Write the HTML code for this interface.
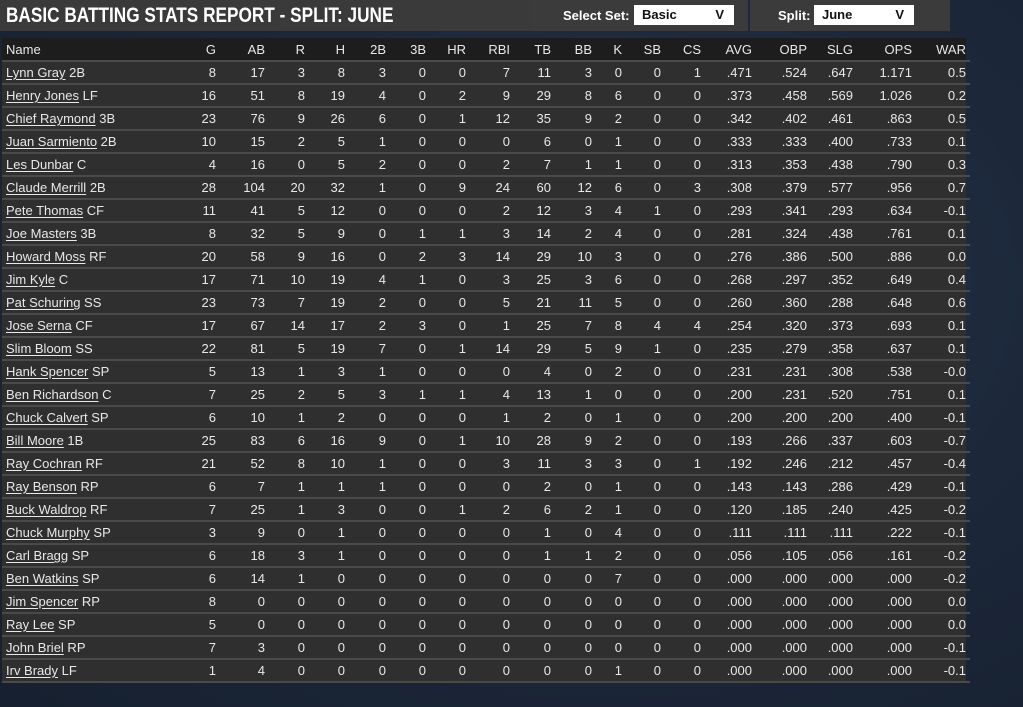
<!DOCTYPE html>
<html><head><meta charset="utf-8"><style>
body{margin:0;width:1023px;height:707px;overflow:hidden;background:radial-gradient(ellipse at 60% 40%,#243247 0%,#1b2638 60%,#16202f 100%);font-family:"Liberation Sans",sans-serif;color:#e8e8e8;position:relative}
.title{position:absolute;left:0;top:0;width:530px;height:31px;background:#3a3a3a}
.title span{position:absolute;left:6px;top:4px;font-size:21px;font-weight:bold;color:#fff;transform:scaleX(.82);transform-origin:left;white-space:nowrap}
.sel{position:absolute;top:0;height:31px;background:#3b3b3b;font-size:13px;font-weight:bold;color:#fff}
.box{position:absolute;top:5px;height:20px;background:#fff;color:#111;font-size:13px;font-weight:bold;line-height:20px;padding-left:8px;box-sizing:border-box}
.box i{position:absolute;right:10px;top:0;font-style:normal}
table{position:absolute;left:2px;top:38px;width:968px;border-collapse:collapse;font-size:13px;table-layout:fixed}
td{height:21px;padding:0;text-align:right;border-bottom:2px solid #4a4a4a;white-space:nowrap;overflow:visible}
tr{background:#2f2f2f}
tr.h{background:#1d1d1d}
tr.h td{height:22px;border-bottom:2px solid #4a4a4a}
td:first-child{text-align:left;text-indent:4px}
td:last-child{position:relative;left:-4px}
u{text-decoration:underline;text-underline-offset:2px}
</style></head><body>
<div class="title"><span>BASIC BATTING STATS REPORT - SPLIT: JUNE</span></div>
<div class="sel" style="left:530px;width:218px"><span style="position:absolute;left:33px;top:8px">Select Set:</span><div class="box" style="left:104px;width:100px">Basic<i>V</i></div></div>
<div class="sel" style="left:750px;width:200px"><span style="position:absolute;left:28px;top:8px">Split:</span><div class="box" style="left:64px;width:100px">June<i>V</i></div></div>
<table>
<colgroup><col style="width:174px"><col style="width:40px"><col style="width:49px"><col style="width:40px"><col style="width:40px"><col style="width:41px"><col style="width:40px"><col style="width:40px"><col style="width:44px"><col style="width:41px"><col style="width:41px"><col style="width:30px"><col style="width:39px"><col style="width:40px"><col style="width:51px"><col style="width:55px"><col style="width:46px"><col style="width:59px"><col style="width:58px"></colgroup>
<tr class="h"><td>Name</td><td>G</td><td>AB</td><td>R</td><td>H</td><td>2B</td><td>3B</td><td>HR</td><td>RBI</td><td>TB</td><td>BB</td><td>K</td><td>SB</td><td>CS</td><td>AVG</td><td>OBP</td><td>SLG</td><td>OPS</td><td>WAR</td></tr>
<tr><td><u>Lynn Gray</u> 2B</td><td>8</td><td>17</td><td>3</td><td>8</td><td>3</td><td>0</td><td>0</td><td>7</td><td>11</td><td>3</td><td>0</td><td>0</td><td>1</td><td>.471</td><td>.524</td><td>.647</td><td>1.171</td><td>0.5</td></tr>
<tr><td><u>Henry Jones</u> LF</td><td>16</td><td>51</td><td>8</td><td>19</td><td>4</td><td>0</td><td>2</td><td>9</td><td>29</td><td>8</td><td>6</td><td>0</td><td>0</td><td>.373</td><td>.458</td><td>.569</td><td>1.026</td><td>0.2</td></tr>
<tr><td><u>Chief Raymond</u> 3B</td><td>23</td><td>76</td><td>9</td><td>26</td><td>6</td><td>0</td><td>1</td><td>12</td><td>35</td><td>9</td><td>2</td><td>0</td><td>0</td><td>.342</td><td>.402</td><td>.461</td><td>.863</td><td>0.5</td></tr>
<tr><td><u>Juan Sarmiento</u> 2B</td><td>10</td><td>15</td><td>2</td><td>5</td><td>1</td><td>0</td><td>0</td><td>0</td><td>6</td><td>0</td><td>1</td><td>0</td><td>0</td><td>.333</td><td>.333</td><td>.400</td><td>.733</td><td>0.1</td></tr>
<tr><td><u>Les Dunbar</u> C</td><td>4</td><td>16</td><td>0</td><td>5</td><td>2</td><td>0</td><td>0</td><td>2</td><td>7</td><td>1</td><td>1</td><td>0</td><td>0</td><td>.313</td><td>.353</td><td>.438</td><td>.790</td><td>0.3</td></tr>
<tr><td><u>Claude Merrill</u> 2B</td><td>28</td><td>104</td><td>20</td><td>32</td><td>1</td><td>0</td><td>9</td><td>24</td><td>60</td><td>12</td><td>6</td><td>0</td><td>3</td><td>.308</td><td>.379</td><td>.577</td><td>.956</td><td>0.7</td></tr>
<tr><td><u>Pete Thomas</u> CF</td><td>11</td><td>41</td><td>5</td><td>12</td><td>0</td><td>0</td><td>0</td><td>2</td><td>12</td><td>3</td><td>4</td><td>1</td><td>0</td><td>.293</td><td>.341</td><td>.293</td><td>.634</td><td>-0.1</td></tr>
<tr><td><u>Joe Masters</u> 3B</td><td>8</td><td>32</td><td>5</td><td>9</td><td>0</td><td>1</td><td>1</td><td>3</td><td>14</td><td>2</td><td>4</td><td>0</td><td>0</td><td>.281</td><td>.324</td><td>.438</td><td>.761</td><td>0.1</td></tr>
<tr><td><u>Howard Moss</u> RF</td><td>20</td><td>58</td><td>9</td><td>16</td><td>0</td><td>2</td><td>3</td><td>14</td><td>29</td><td>10</td><td>3</td><td>0</td><td>0</td><td>.276</td><td>.386</td><td>.500</td><td>.886</td><td>0.0</td></tr>
<tr><td><u>Jim Kyle</u> C</td><td>17</td><td>71</td><td>10</td><td>19</td><td>4</td><td>1</td><td>0</td><td>3</td><td>25</td><td>3</td><td>6</td><td>0</td><td>0</td><td>.268</td><td>.297</td><td>.352</td><td>.649</td><td>0.4</td></tr>
<tr><td><u>Pat Schuring</u> SS</td><td>23</td><td>73</td><td>7</td><td>19</td><td>2</td><td>0</td><td>0</td><td>5</td><td>21</td><td>11</td><td>5</td><td>0</td><td>0</td><td>.260</td><td>.360</td><td>.288</td><td>.648</td><td>0.6</td></tr>
<tr><td><u>Jose Serna</u> CF</td><td>17</td><td>67</td><td>14</td><td>17</td><td>2</td><td>3</td><td>0</td><td>1</td><td>25</td><td>7</td><td>8</td><td>4</td><td>4</td><td>.254</td><td>.320</td><td>.373</td><td>.693</td><td>0.1</td></tr>
<tr><td><u>Slim Bloom</u> SS</td><td>22</td><td>81</td><td>5</td><td>19</td><td>7</td><td>0</td><td>1</td><td>14</td><td>29</td><td>5</td><td>9</td><td>1</td><td>0</td><td>.235</td><td>.279</td><td>.358</td><td>.637</td><td>0.1</td></tr>
<tr><td><u>Hank Spencer</u> SP</td><td>5</td><td>13</td><td>1</td><td>3</td><td>1</td><td>0</td><td>0</td><td>0</td><td>4</td><td>0</td><td>2</td><td>0</td><td>0</td><td>.231</td><td>.231</td><td>.308</td><td>.538</td><td>-0.0</td></tr>
<tr><td><u>Ben Richardson</u> C</td><td>7</td><td>25</td><td>2</td><td>5</td><td>3</td><td>1</td><td>1</td><td>4</td><td>13</td><td>1</td><td>0</td><td>0</td><td>0</td><td>.200</td><td>.231</td><td>.520</td><td>.751</td><td>0.1</td></tr>
<tr><td><u>Chuck Calvert</u> SP</td><td>6</td><td>10</td><td>1</td><td>2</td><td>0</td><td>0</td><td>0</td><td>1</td><td>2</td><td>0</td><td>1</td><td>0</td><td>0</td><td>.200</td><td>.200</td><td>.200</td><td>.400</td><td>-0.1</td></tr>
<tr><td><u>Bill Moore</u> 1B</td><td>25</td><td>83</td><td>6</td><td>16</td><td>9</td><td>0</td><td>1</td><td>10</td><td>28</td><td>9</td><td>2</td><td>0</td><td>0</td><td>.193</td><td>.266</td><td>.337</td><td>.603</td><td>-0.7</td></tr>
<tr><td><u>Ray Cochran</u> RF</td><td>21</td><td>52</td><td>8</td><td>10</td><td>1</td><td>0</td><td>0</td><td>3</td><td>11</td><td>3</td><td>3</td><td>0</td><td>1</td><td>.192</td><td>.246</td><td>.212</td><td>.457</td><td>-0.4</td></tr>
<tr><td><u>Ray Benson</u> RP</td><td>6</td><td>7</td><td>1</td><td>1</td><td>1</td><td>0</td><td>0</td><td>0</td><td>2</td><td>0</td><td>1</td><td>0</td><td>0</td><td>.143</td><td>.143</td><td>.286</td><td>.429</td><td>-0.1</td></tr>
<tr><td><u>Buck Waldrop</u> RF</td><td>7</td><td>25</td><td>1</td><td>3</td><td>0</td><td>0</td><td>1</td><td>2</td><td>6</td><td>2</td><td>1</td><td>0</td><td>0</td><td>.120</td><td>.185</td><td>.240</td><td>.425</td><td>-0.2</td></tr>
<tr><td><u>Chuck Murphy</u> SP</td><td>3</td><td>9</td><td>0</td><td>1</td><td>0</td><td>0</td><td>0</td><td>0</td><td>1</td><td>0</td><td>4</td><td>0</td><td>0</td><td>.111</td><td>.111</td><td>.111</td><td>.222</td><td>-0.1</td></tr>
<tr><td><u>Carl Bragg</u> SP</td><td>6</td><td>18</td><td>3</td><td>1</td><td>0</td><td>0</td><td>0</td><td>0</td><td>1</td><td>1</td><td>2</td><td>0</td><td>0</td><td>.056</td><td>.105</td><td>.056</td><td>.161</td><td>-0.2</td></tr>
<tr><td><u>Ben Watkins</u> SP</td><td>6</td><td>14</td><td>1</td><td>0</td><td>0</td><td>0</td><td>0</td><td>0</td><td>0</td><td>0</td><td>7</td><td>0</td><td>0</td><td>.000</td><td>.000</td><td>.000</td><td>.000</td><td>-0.2</td></tr>
<tr><td><u>Jim Spencer</u> RP</td><td>8</td><td>0</td><td>0</td><td>0</td><td>0</td><td>0</td><td>0</td><td>0</td><td>0</td><td>0</td><td>0</td><td>0</td><td>0</td><td>.000</td><td>.000</td><td>.000</td><td>.000</td><td>0.0</td></tr>
<tr><td><u>Ray Lee</u> SP</td><td>5</td><td>0</td><td>0</td><td>0</td><td>0</td><td>0</td><td>0</td><td>0</td><td>0</td><td>0</td><td>0</td><td>0</td><td>0</td><td>.000</td><td>.000</td><td>.000</td><td>.000</td><td>0.0</td></tr>
<tr><td><u>John Briel</u> RP</td><td>7</td><td>3</td><td>0</td><td>0</td><td>0</td><td>0</td><td>0</td><td>0</td><td>0</td><td>0</td><td>0</td><td>0</td><td>0</td><td>.000</td><td>.000</td><td>.000</td><td>.000</td><td>-0.1</td></tr>
<tr><td><u>Irv Brady</u> LF</td><td>1</td><td>4</td><td>0</td><td>0</td><td>0</td><td>0</td><td>0</td><td>0</td><td>0</td><td>0</td><td>1</td><td>0</td><td>0</td><td>.000</td><td>.000</td><td>.000</td><td>.000</td><td>-0.1</td></tr>
</table>
</body></html>
